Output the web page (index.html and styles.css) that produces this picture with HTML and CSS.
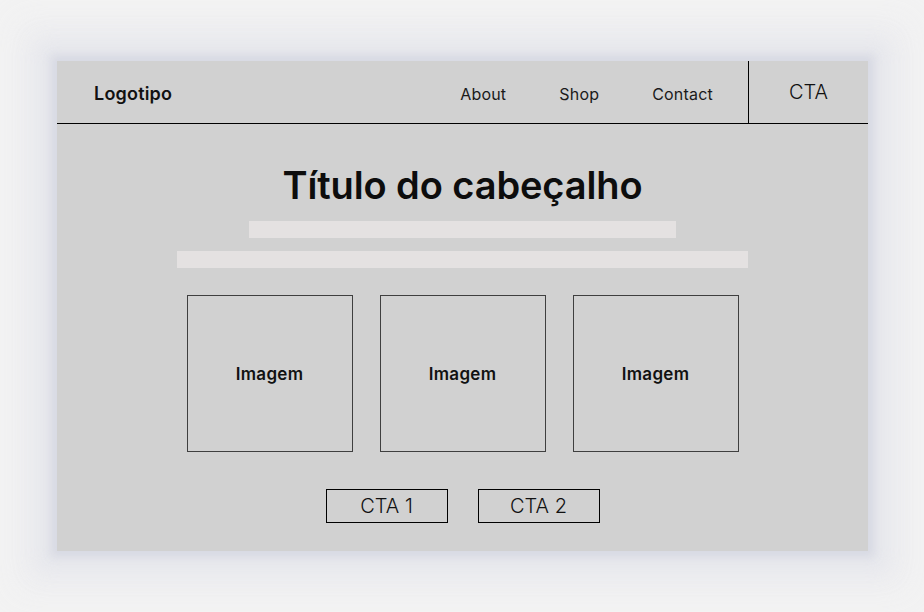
FILE: index.html
```html
<!DOCTYPE html>
<html lang="pt">
<head>
<meta charset="utf-8">
<title>Wireframe</title>
<link rel="stylesheet" href="styles.css">
</head>
<body>
<div class="stage">
  <div class="card">
    <header class="header">
      <div class="logo">Logotipo</div>
      <nav class="nav">
        <a class="nav-link">About</a>
        <a class="nav-link">Shop</a>
        <a class="nav-link">Contact</a>
      </nav>
      <div class="header-cta">CTA</div>
    </header>
    <main class="hero">
      <h1 class="title">Título do cabeçalho</h1>
      <div class="bar bar-short"></div>
      <div class="bar bar-long"></div>
      <div class="images">
        <div class="image-box">Imagem</div>
        <div class="image-box">Imagem</div>
        <div class="image-box">Imagem</div>
      </div>
      <div class="buttons">
        <div class="btn">CTA 1</div>
        <div class="btn">CTA 2</div>
      </div>
    </main>
  </div>
</div>
</body>
</html>
```
FILE: styles.css
```css
* { box-sizing: border-box; }
html, body { margin: 0; padding: 0; }
body {
  background: #f3f3f3;
  font-family: Inter, "Noto Sans", "Liberation Sans", sans-serif;
  color: #111;
  width: 924px;
  height: 612px;
  overflow: hidden;
}
.stage {
  padding: 61px 56px 0 57px;
}
.card {
  width: 811px;
  height: 490px;
  background: #d1d1d1;
  box-shadow:
    0 0 8px 6px rgba(214, 216, 226, 0.9),
    0 0 22px 22px rgba(228, 229, 235, 0.85),
    0 0 30px 42px rgba(238, 238, 240, 0.8);
  display: flex;
  flex-direction: column;
}
.header {
  height: 63px;
  border-bottom: 1px solid #000;
  display: flex;
  align-items: stretch;
}
.logo {
  flex: 1;
  display: flex;
  align-items: center;
  padding-left: 37px;
  font-weight: 600;
  font-size: 18px;
  letter-spacing: 0.2px;
  padding-top: 3px;
}
.nav {
  display: flex;
  align-items: center;
  gap: 53px;
  padding-right: 35px;
  padding-top: 4px;
}
.nav-link {
  font-size: 16px;
  font-weight: 400;
  color: #1a1a1a;
  letter-spacing: 0.2px;
}
.header-cta {
  width: 120px;
  border-left: 1px solid #000;
  display: flex;
  align-items: center;
  justify-content: center;
  font-size: 20px;
  font-weight: 300;
  padding-bottom: 0;
}
.hero {
  display: flex;
  flex-direction: column;
  align-items: center;
  padding-top: 39px;
}
.title {
  margin: 0;
  font-size: 38px;
  line-height: 44px;
  font-weight: 600;
  letter-spacing: -0.1px;
  color: #0d0d0d;
}
.bar {
  height: 17px;
  background: #e4e1e1;
}
.bar-short {
  width: 427px;
  margin-top: 14px;
}
.bar-long {
  width: 571px;
  margin-top: 13px;
}
.images {
  display: flex;
  gap: 27px;
  margin-top: 27px;
}
.image-box {
  width: 166px;
  height: 157px;
  border: 1px solid #3f3f3f;
  display: flex;
  align-items: center;
  justify-content: center;
  font-weight: 600;
  font-size: 17px;
  letter-spacing: 0.3px;
  padding-top: 1px;
}
.buttons {
  display: flex;
  gap: 30px;
  margin-top: 37px;
}
.btn {
  width: 122px;
  height: 34px;
  border: 1px solid #000;
  display: flex;
  align-items: center;
  justify-content: center;
  font-size: 20px;
  font-weight: 300;
}
```
